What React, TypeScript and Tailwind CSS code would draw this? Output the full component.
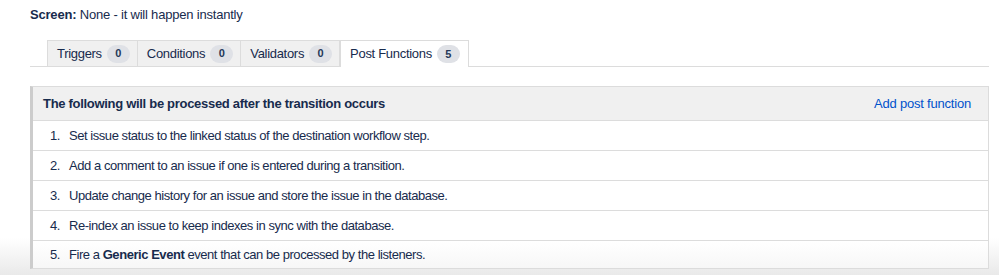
import React from "react";

type Tab = { label: string; count: number; active?: boolean };

const tabs: Tab[] = [
	{ label: "Triggers", count: 0 },
	{ label: "Conditions", count: 0 },
	{ label: "Validators", count: 0 },
	{ label: "Post Functions", count: 5, active: true },
];

const steps: React.ReactNode[] = [
	"Set issue status to the linked status of the destination workflow step.",
	"Add a comment to an issue if one is entered during a transition.",
	"Update change history for an issue and store the issue in the database.",
	"Re-index an issue to keep indexes in sync with the database.",
	<>
		Fire a <strong className="font-bold">Generic Event</strong> event that can
		be processed by the listeners.
	</>,
];

export default function App() {
	return (
		<div className="h-[275px] w-[999px] overflow-hidden bg-[linear-gradient(to_bottom,#ffffff_238px,#e9e9e9_275px)] font-['Liberation_Sans',Arial,sans-serif] text-[13px] text-[#172b4d]">
			<div className="pl-[30px] pt-[7px] leading-[16px] tracking-[-0.2px]">
				<span className="font-bold">Screen:</span> None - it will happen
				instantly
			</div>

			<div className="ml-[30px] mr-[10px] mt-[17px] flex border-b border-[#dcdcdc] pl-[17px]">
				{tabs.map((tab) => (
					<div
						key={tab.label}
						className={
							tab.active
								? "-mb-px flex h-[27px] items-center gap-[5px] border border-b-0 border-[#dcdcdc] bg-white pl-[9px] pr-[8px]"
								: "flex h-[26px] items-center gap-[5px] border border-l-0 border-b-0 border-[#dcdcdc] bg-[#f0f0f0] pl-[9px] pr-[7px] first:border-l"
						}
					>
						<span className="tracking-[-0.3px]">{tab.label}</span>
						<span className="flex h-[18px] w-[23px] items-center justify-center rounded-full bg-[#dfe1e6] text-[11px] font-bold text-[#253858]">
							{tab.count}
						</span>
					</div>
				))}
			</div>

			<div className="ml-[30px] mr-[10px] mt-[19px] border border-l-[3px] border-[#dcdcdc] border-l-[#cccccc] bg-white">
				<div className="flex h-[34px] items-center justify-between border-b border-[#dcdcdc] bg-[#f0f0f0] pl-[10px] pr-[17px]">
					<span className="font-bold tracking-[-0.3px]">
						The following will be processed after the transition occurs
					</span>
					<span className="tracking-[-0.2px] text-[#0052cc]">
						Add post function
					</span>
				</div>
				{steps.map((step, i) => (
					<div
						key={i}
						className="flex h-[30px] items-center border-b border-[#dcdcdc] pl-[17px] tracking-[-0.45px] last:h-[27px] last:border-b-0 last:bg-[linear-gradient(to_bottom,#ffffff,#f7f7f7)]"
					>
						<span className="w-[19px]">{i + 1}.</span>
						<span>{step}</span>
					</div>
				))}
			</div>
		</div>
	);
}
